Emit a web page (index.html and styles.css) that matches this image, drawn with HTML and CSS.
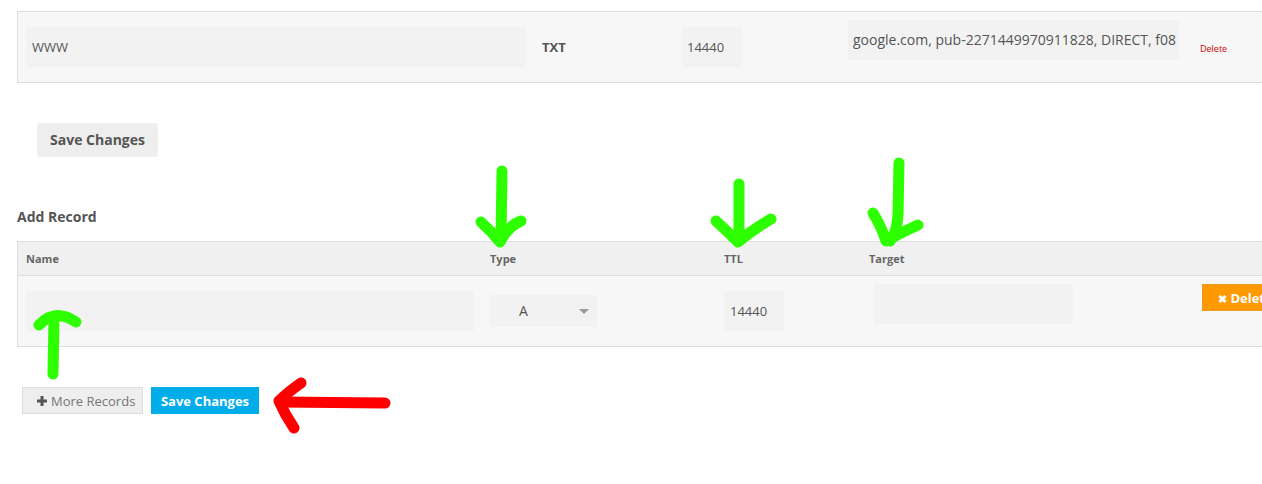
FILE: index.html
```html
<!DOCTYPE html>
<html lang="en">
<head>
<meta charset="utf-8">
<title>DNS Records</title>
<link rel="stylesheet" href="styles.css">
</head>
<body>
<div class="page">
  <div class="table top-table">
    <div class="row row-top">
      <div class="cell"><div class="field name-field">WWW</div></div>
      <div class="cell"><span class="type-text">TXT</span></div>
      <div class="cell"><div class="field ttl-field">14440</div></div>
      <div class="cell cell-target"><div class="field target-field">google.com, pub-2271449970911828, DIRECT, f08</div></div>
      <div class="cell cell-action"><a class="delete-link">Delete</a></div>
    </div>
  </div>

  <button class="btn-grey">Save Changes</button>

  <h3 class="section-title">Add Record</h3>

  <div class="table add-table">
    <div class="head">
      <div class="hcell">Name</div>
      <div class="hcell">Type</div>
      <div class="hcell">TTL</div>
      <div class="hcell">Target</div>
      <div class="hcell"></div>
    </div>
    <div class="row row-add">
      <div class="cell"><div class="field name-field2"></div></div>
      <div class="cell"><div class="select"><span>A</span><i class="caret"></i></div></div>
      <div class="cell"><div class="field ttl-field2">14440</div></div>
      <div class="cell"><div class="field target-field2"></div></div>
      <div class="cell"><button class="btn-orange"><span class="x">✖</span> Delete</button></div>
    </div>
  </div>

  <div class="actions">
    <button class="btn-more"><svg class="plus" width="10" height="10" viewBox="0 0 10 10"><path d="M5 0v10M0 5h10" stroke="#555" stroke-width="3"/></svg>More Records</button>
    <button class="btn-blue">Save Changes</button>
  </div>
</div>

<svg class="annotations" width="1262" height="484" viewBox="0 0 1262 484">
  <g fill="none" stroke="#2eff00" stroke-width="11" stroke-linecap="round" stroke-linejoin="round">
    <path d="M502 171 L501 239"/>
    <path d="M481 222 Q492 232 500 242 Q508 226 521 221"/>
    <path d="M739 184 L739 240"/>
    <path d="M716 221 Q728 232 738 242 Q752 230 771 219"/>
    <path d="M899 163 L898 215 Q897 232 890 241"/>
    <path d="M873 213 Q882 228 886 241 Q902 232 918 225"/>
    <path d="M39 325 Q55 308 76 322"/>
    <path d="M54 318 L53 374"/>
  </g>
  <g fill="none" stroke="#ff0000" stroke-width="11" stroke-linecap="round" stroke-linejoin="round">
    <path d="M385 403 L281 402"/>
    <path d="M301 383 Q288 392 279 401 Q285 415 294 428"/>
  </g>
</svg>
</body>
</html>
```

FILE: styles.css
```css
html, body {
  margin: 0;
  padding: 0;
}

body {
  position: relative;
  width: 1262px;
  height: 484px;
  overflow: hidden;
  background: #fff;
  font-family: "Open Sans", "Liberation Sans", sans-serif;
  color: #555;
}

.page {
  padding-left: 17px;
}

.table {
  width: 1300px;
  border: 1px solid #ddd;
  border-right: none;
  box-sizing: border-box;
}

.top-table {
  margin-top: 11px;
}

.row {
  display: grid;
  height: 70px;
  background: #f7f7f7;
  align-items: start;
}

.row-top {
  grid-template-columns: 516px 140px 166px 352px 1fr;
}

.row-add {
  grid-template-columns: 464px 234px 145px 333px 1fr;
}

.cell {
  padding-left: 8px;
  box-sizing: border-box;
}

.field {
  background: #f2f2f2;
  height: 40px;
  line-height: 40px;
  font-size: 13px;
  color: #555;
  box-sizing: border-box;
  overflow: hidden;
  white-space: nowrap;
}

.name-field {
  margin-top: 15px;
  width: 500px;
  padding-left: 6px;
}

.type-text {
  display: block;
  margin-top: 15px;
  line-height: 40px;
  font-size: 13px;
  font-weight: 700;
  color: #555;
}

.ttl-field {
  margin-top: 15px;
  width: 60px;
  padding-left: 5px;
}

.target-field {
  margin-top: 8px;
  width: 331px;
  padding-left: 5px;
  font-size: 14px;
}

.delete-link {
  display: block;
  margin-top: 30px;
  line-height: 14px;
  font-size: 9px;
  color: #c00;
}

.btn-grey {
  display: block;
  margin: 40px 0 0 20px;
  height: 34px;
  width: 121px;
  padding: 0 0 1px;
  border: none;
  border-radius: 3px;
  background: #eee;
  font-family: inherit;
  font-size: 14px;
  font-weight: 700;
  color: #555;
}

.section-title {
  margin: 50px 0 14px 0;
  line-height: 20px;
  font-size: 14px;
  font-weight: 700;
  color: #555;
}

.head {
  display: grid;
  grid-template-columns: 464px 234px 145px 333px 1fr;
  height: 33px;
  background: #f0f0f0;
  border-bottom: 1px solid #ddd;
}

.hcell {
  padding-left: 8px;
  line-height: 33px;
  font-size: 11px;
  font-weight: 700;
  color: #666;
}

.name-field2 {
  margin-top: 15px;
  width: 448px;
}

.select {
  position: relative;
  margin-top: 19px;
  width: 107px;
  height: 32px;
  line-height: 32px;
  background: #f2f2f2;
  font-size: 14px;
  color: #555;
  padding-left: 29px;
  box-sizing: border-box;
}

.caret {
  position: absolute;
  left: 89px;
  top: 14px;
  width: 0;
  height: 0;
  border-left: 5px solid transparent;
  border-right: 5px solid transparent;
  border-top: 5px solid #999;
}

.ttl-field2 {
  margin-top: 15px;
  width: 60px;
  padding-left: 6px;
}

.target-field2 {
  margin-top: 8px;
  margin-left: 5px;
  width: 199px;
}

.btn-orange {
  display: block;
  margin-top: 8px;
  height: 27px;
  width: 90px;
  padding: 0 0 0 15px;
  text-align: left;
  white-space: nowrap;
  background: #ff9900;
  border: 1px solid #eb9a24;
  font-family: inherit;
  font-size: 13px;
  font-weight: 700;
  color: #fff;
}

.btn-orange .x {
  font-size: 11px;
}

.actions {
  display: flex;
  gap: 8px;
  margin: 40px 0 0 5px;
}

.btn-more {
  display: flex;
  align-items: center;
  gap: 4px;
  height: 27px;
  width: 121px;
  padding: 0 0 0 14px;
  box-sizing: border-box;
  background: #eee;
  border: 1px solid #ddd;
  font-family: inherit;
  font-size: 13px;
  color: #777;
}

.btn-blue {
  height: 27px;
  width: 108px;
  padding: 0;
  border: none;
  background: #00acea;
  font-family: inherit;
  font-size: 13px;
  font-weight: 700;
  color: #fff;
}

.annotations {
  position: absolute;
  left: 0;
  top: 0;
  pointer-events: none;
}
```
